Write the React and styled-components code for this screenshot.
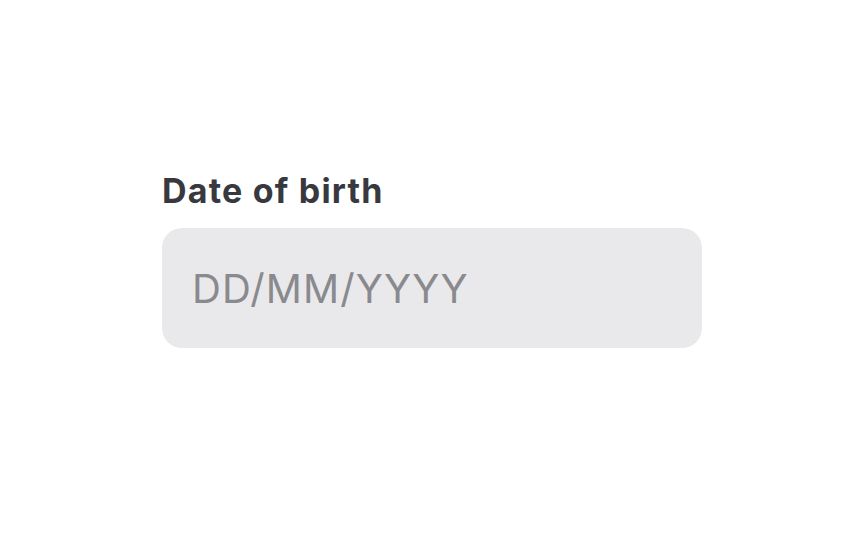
import styled, { createGlobalStyle } from 'styled-components';

const GlobalStyle = createGlobalStyle`
  body {
    margin: 0;
    background: #ffffff;
    font-family: Inter, "Noto Sans", sans-serif;
  }
`;

const App = () => {
  return (
    <Page>
      <GlobalStyle />
      <Field>
        <Label htmlFor="dob">Date of birth</Label>
        <Input id="dob" type="text" placeholder="DD/MM/YYYY" />
      </Field>
    </Page>
  );
};

const Page = styled.main`
  display: flex;
  justify-content: center;
  padding-top: 171px;
`;

const Field = styled.div`
  display: flex;
  flex-direction: column;
  width: 540px;
`;

const Label = styled.label`
  font-size: 34px;
  line-height: 40px;
  font-weight: 700;
  letter-spacing: 1.2px;
  color: #38383f;
  margin-bottom: 17px;
`;

const Input = styled.input`
  box-sizing: border-box;
  width: 100%;
  height: 120px;
  padding: 0 30px;
  border: none;
  border-radius: 20px;
  background: #e9e9eb;
  font-family: Inter, "Noto Sans", sans-serif;
  font-size: 40px;
  letter-spacing: 1.1px;
  color: #38383f;
  outline: none;

  &::placeholder {
    color: #8a8a8e;
  }
`;

export default App;
